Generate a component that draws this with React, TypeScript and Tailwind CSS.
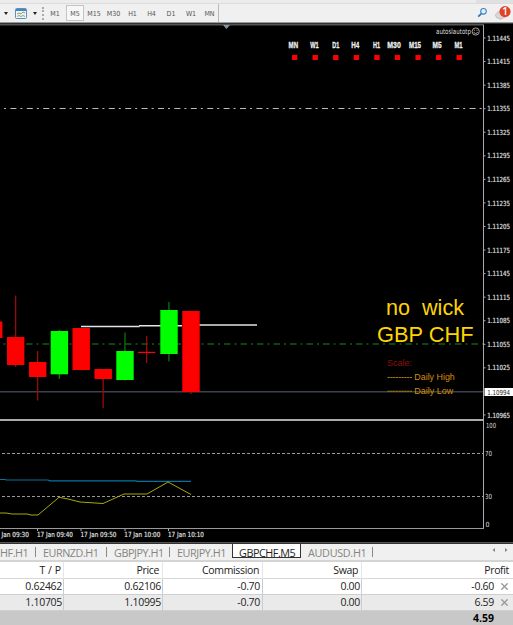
import { X } from 'lucide-react';

const timeframes = [
  { label: 'M1', width: 'w-[22px]' },
  { label: 'M5', width: 'w-[18px]' },
  { label: 'M15', width: 'w-5' },
  { label: 'M30', width: 'w-[19px]' },
  { label: 'H1', width: 'w-[19px]' },
  { label: 'H4', width: 'w-[19px]' },
  { label: 'D1', width: 'w-5' },
  { label: 'W1', width: 'w-5' },
  { label: 'MN', width: 'w-[17px]' },
];

const signals = [
  { label: 'MN', x: 293.3, width: 9.5 },
  { label: 'W1', x: 314.5, width: 8.5 },
  { label: 'D1', x: 335.8, width: 7 },
  { label: 'H4', x: 355.3, width: 8 },
  { label: 'H1', x: 376.6, width: 7 },
  { label: 'M30', x: 394, width: 13.5 },
  { label: 'M15', x: 415, width: 12 },
  { label: 'M5', x: 437, width: 9 },
  { label: 'M1', x: 458.5, width: 8 },
];

const prices = [
  '1.11445', '1.11415', '1.11385', '1.11355', '1.11325', '1.11295', '1.11265', '1.11235', '1.11205',
  '1.11175', '1.11145', '1.11115', '1.11085', '1.11055', '1.11025', '', '1.10965',
];

const candles = [
  { x: -15, top: 321.5, bottom: 338, high: 321.5, low: 338, up: false },
  { x: 7, top: 337, bottom: 365, high: 295.5, low: 367, up: false },
  { x: 29, top: 362, bottom: 377, high: 351, low: 400.5, up: false },
  { x: 50.7, top: 331, bottom: 374.3, high: 330, low: 379, up: true },
  { x: 72.5, top: 328, bottom: 370, high: 328, low: 370, up: false },
  { x: 94.5, top: 369, bottom: 379, high: 369, low: 408, up: false },
  { x: 116.3, top: 351, bottom: 380, high: 332.5, low: 380.5, up: true },
  { x: 138, top: 351.8, bottom: 353, high: 336, low: 363, up: false },
  { x: 160.3, top: 310, bottom: 354, high: 302, low: 361.5, up: true },
  { x: 182.3, top: 311, bottom: 392, high: 311, low: 394, up: false },
];

const times = [
  { label: 'Jan 09:30', tick: -7, x: 1.5, width: 27.5 },
  { label: '17 Jan 09:40', tick: 37, x: 37, width: 36 },
  { label: '17 Jan 09:50', tick: 80.5, x: 80.5, width: 36 },
  { label: '17 Jan 10:00', tick: 124.5, x: 124.3, width: 36 },
  { label: '17 Jan 10:10', tick: 168, x: 168, width: 36 },
];

const orders = [
  { tp: '0.62462', price: '0.62106', commission: '-0.70', swap: '0.00', profit: '-0.60' },
  { tp: '1.10705', price: '1.10995', commission: '-0.70', swap: '0.00', profit: '6.59' },
];

function Caret() {
  return <span className="h-0 w-0 border-x-[2px] border-t-[3px] border-x-transparent border-t-[#222]" />;
}

function Toolbar() {
  return (
    <div className="h-[22px] bg-[#f0f0f0]">
      <div className="flex h-1 justify-end border-b border-[#dcdcdc] bg-[#ececec]">
        <span className="w-[37px] bg-[#e0e0e0]" />
      </div>
      <div className="flex h-[18px] items-center">
        <div className="flex w-[41px] items-center pl-[4px]">
          <Caret />
          <svg className="ml-[7px] mr-[6px]" width="12" height="11" viewBox="0 0 12 11">
            <rect x="0.5" y="0.5" width="11" height="10" rx="1" fill="#eef6fb" stroke="#5b91bc" />
            <path d="M1 2h10" stroke="#4a86ba" strokeWidth="2" />
            <path d="M2 6l2-1 2 1 2-2 2 1" stroke="#a89358" fill="none" />
            <path d="M2 8.5l2-1 2 1 2-1 2 1" stroke="#78a87c" fill="none" />
          </svg>
          <Caret />
        </div>
        <div className="ml-[1px] h-[13px] border-l-2 border-dotted border-[#aaa]" />
        <div className="flex h-full items-center border-r border-[#b9b9b9] font-['DejaVu_Sans_Condensed','DejaVu_Sans',sans-serif] text-[7px] text-[#555]">
          {timeframes.map((tf) => (
            <span
              key={tf.label}
              className={`${tf.width} flex h-4 items-center justify-center pt-[2px] ${
                tf.label === 'M5' ? 'border border-[#c4c4c4] bg-[#f7f7f7]' : ''
              }`}
            >
              {tf.label}
            </span>
          ))}
        </div>
        <svg className="ml-auto" width="37" height="18" viewBox="476 4 37 18">
          <circle cx="483.5" cy="11.3" r="2.8" fill="#e0effa" stroke="#4285bd" strokeWidth="1.1" />
          <path d="M481.4 13.6l-3.2 3" stroke="#3475b4" strokeWidth="1.8" />
          <path d="M495.5 15.5q.5-4 5.5-4t5 3-4 4l-2 1-.5-1q-3.500 0-4-3z" fill="#d7d7d7" stroke="#aaa" strokeWidth="0.6" />
          <circle cx="505" cy="11.6" r="5.6" fill="#e04328" />
          <text x="505" y="15.2" textAnchor="middle" fontSize="10" fontWeight="600" fill="#fff" fontFamily="Open Sans, sans-serif">1</text>
        </svg>
      </div>
    </div>
  );
}

function Chart() {
  return (
    <svg className="block" width="513" height="521" viewBox="0 22 513 521" fontFamily="DejaVu Sans Condensed, DejaVu Sans, sans-serif">
      <rect x="0" y="22" width="513" height="521" fill="#000" />
      <rect x="0" y="22" width="513" height="1" fill="#999" />
      <rect x="0" y="23" width="513" height="1" fill="#333" />
      <rect x="0" y="24" width="484" height="1.5" fill="#555" />
      <path d="M223 25h7l-3.5 4z" fill="#8793a3" />

      {/* Price levels */}
      <path d="M0 108.5H483" stroke="#bbb" strokeDasharray="6 4 2 4.4" strokeDashoffset="6" />
      <path d="M0 344H483" stroke="#155915" strokeWidth="1.5" strokeDasharray="6.5 4 2 4" strokeDashoffset="7" />
      <path d="M0 391.8H483" stroke="#3a4148" strokeWidth="1.4" />
      <path d="M81 326.5H139.5M139 325.7H182M198 325H257" stroke="#e4e4e4" strokeWidth="1.6" />

      {candles.map((c) => (
        <g key={c.x}>
          <rect x={c.x + 8} y={c.high} width="1.3" height={c.low - c.high} fill={c.up ? '#087808' : '#9c0909'} />
          <rect x={c.x} y={c.top} width="17.4" height={c.bottom - c.top} fill={c.up ? '#00ff00' : '#ff0000'} />
        </g>
      ))}

      {/* Signal panel */}
      <text x="436" y="34" fontSize="7.5" fill="#ddd" textLength="35" lengthAdjust="spacingAndGlyphs">autoslautotp</text>
      <g fill="none" stroke="#ccc" strokeWidth="0.8">
        <circle cx="475.7" cy="31.5" r="3.6" />
        <path d="M473.6 32.3q2.1 2.7 4.2 0M474.4 29.8v1M477 29.8v1" />
      </g>
      {signals.map((s, i) => (
        <g key={s.label}>
          <text
            x={s.x}
            y="47.8"
            textAnchor="middle"
            fontFamily="Liberation Sans, sans-serif"
            fontWeight="700"
            fontSize="9"
            fill="#eee"
            stroke="#eee"
            strokeWidth="0.3"
            textLength={s.width}
            lengthAdjust="spacingAndGlyphs"
          >
            {s.label}
          </text>
          <rect x={292 + i * 20.57} y="55" width="5.3" height="5" fill="#f00" />
        </g>
      ))}

      {/* Notes */}
      <g fontFamily="Liberation Sans, sans-serif">
        <text x="386" y="314.7" fontSize="21.5" fill="#ffd400" textLength="78" lengthAdjust="spacingAndGlyphs">{'no\u00a0 wick'}</text>
        <text x="377" y="342" fontSize="21.5" fill="#ffd400" textLength="96.5" lengthAdjust="spacingAndGlyphs">GBP CHF</text>
        <text x="387" y="366.2" fontSize="9.5" fill="#8c1208" textLength="25" lengthAdjust="spacingAndGlyphs">Scale:</text>
        <path d="M387.500 377.5H412M387.5 391.2H412" stroke="#b98205" strokeWidth="0.9" strokeDasharray="2.4 0.4" />
        <text x="414.3" y="380.2" fontSize="9.500" fill="#d48d0b" textLength="40.5" lengthAdjust="spacingAndGlyphs">Daily High</text>
        <text x="414.3" y="393.8" fontSize="9.5" fill="#d48d0b" textLength="39" lengthAdjust="spacingAndGlyphs">Daily Low</text>
      </g>

      {/* Price axis */}
      <path d="M483.5 25V528.5" stroke="#aaa" />
      {prices.map((p, i) =>
        p ? (
          <g key={p}>
            <path d={`M484 ${38 + i * 23.56}h1.5`} stroke="#aaa" />
            <text x="487.3" y={40.6 + i * 23.56} fontSize="7" fill="#e4e4e4" stroke="#e4e4e4" strokeWidth="0.15" textLength="22.7" lengthAdjust="spacingAndGlyphs">{p}</text>
          </g>
        ) : null
      )}
      <rect x="484.5" y="388" width="28.5" height="8" fill="#fff" />
      <text x="487.3" y="394.6" fontSize="7" fill="#222" textLength="22.7" lengthAdjust="spacingAndGlyphs">1.10994</text>

      {/* Oscillator */}
      <rect x="0" y="419" width="484" height="2" fill="#aaa" />
      <path d="M2 453.5H483M2 496.5H483" stroke="#999" strokeDasharray="3 2" />
      <path d="M0 479.5H5L6 480H48L50 480.8H136L137 481.3H191" fill="none" stroke="#08749d" strokeWidth="1.2" />
      <path
        d="M0 513L6 513L12 514L27 514L31 515H38L59 497.3L68 499L80 502L103 503.5L124 494H147L168 482L191 494.5"
        fill="none"
        stroke="#aaa80b"
      />
      <path d="M0 528.5H484" stroke="#999" />
      <g fontSize="7" fill="#ddd">
        <text x="486" y="428" textLength="10" lengthAdjust="spacingAndGlyphs">100</text>
        <text x="485" y="456" textLength="7" lengthAdjust="spacingAndGlyphs">70</text>
        <text x="485" y="499" textLength="7" lengthAdjust="spacingAndGlyphs">30</text>
        <text x="485.5" y="526.5">0</text>
      </g>
      {times.map((t) => (
        <g key={t.label}>
          <path d={`M${t.tick + 0.5} 529v2`} stroke="#aaa" />
          <text x={t.x} y="537.4" fontSize="7" fill="#e4e4e4" stroke="#e4e4e4" strokeWidth="0.15" textLength={t.width} lengthAdjust="spacingAndGlyphs">{t.label}</text>
        </g>
      ))}
      <rect x="0" y="542" width="513" height="1" fill="#555" />
    </svg>
  );
}

function Divider() {
  return <span className="mt-[3px] h-[10px] w-px bg-[#888]" />;
}

function ChartTabs() {
  return (
    <div className="flex h-[17px] overflow-hidden border-t border-[#333] bg-[#f0f0f0] text-[10.8px] leading-[16px] tracking-[-0.45px] whitespace-nowrap text-[#85857f]">
      <span className="w-[35px] pt-px">HF.H1</span>
      <Divider />
      <span className="w-[70px] pt-px pl-[7px]">EURNZD.H1</span>
      <Divider />
      <span className="w-[62px] pt-px pl-[7px]">GBPJPY.H1</span>
      <Divider />
      <span className="w-[62px] pt-px pl-[7px]">EURJPY.H1</span>
      <span className="h-[14px] w-[69px] border-x border-b border-[#333] bg-white pt-px pl-[6px] text-[#222]">GBPCHF.M5</span>
      <span className="w-[71px] pt-px pl-[7px] tracking-[-0.3px]">AUDUSD.H1</span>
      <Divider />
      <svg className="ml-auto mr-1" width="18" height="12" viewBox="0 0 18 12">
        <path d="M4 4v4l-2.5-2zM14 4v4l2.500-2z" fill="#888" />
      </svg>
    </div>
  );
}

function OrderTable() {
  return (
    <div className="text-[10.5px] text-[#222]">
      <div className="grid h-[19px] grid-cols-[64px_99px_100px_99px_1fr] border-t-2 border-b border-t-[#d4d4d4] border-b-[#d8d8d8] bg-white text-right leading-[17px] tracking-[-0.35px]">
        <span className="border-r border-[#e6e6e6] pr-[2px] tracking-normal">T / P</span>
        <span className="border-r border-[#e6e6e6] pr-[3px]">Price</span>
        <span className="border-r border-[#e6e6e6] pr-[3px]">Commission</span>
        <span className="border-r border-[#e6e6e6] pr-[3px]">Swap</span>
        <span className="pr-1">Profit</span>
      </div>
      {orders.map((o, i) => (
        <div
          key={o.tp}
          className={`grid h-4 grid-cols-[64px_99px_100px_99px_1fr] border-b border-[#cfcfcf] text-right leading-[15px] tracking-[-0.3px] ${
            i === 1 ? 'bg-[#eaeaea]' : 'bg-white'
          }`}
        >
          <span className="border-r border-[#ccc] pr-[1px]">{o.tp}</span>
          <span className="border-r border-[#ccc] pr-[1px]">{o.price}</span>
          <span className="border-r border-[#ccc] pr-[2px]">{o.commission}</span>
          <span className="border-r border-[#ccc] pr-[1px]">{o.swap}</span>
          <span className="flex items-center justify-end pr-[3px]">
            {o.profit}
            <X size={11} strokeWidth={3} className="ml-[5px] text-[#999]" />
          </span>
        </div>
      ))}
      <div className="h-[14px] bg-[#c8c8c8] pr-[19px] text-right leading-[14px] font-bold text-black">4.59</div>
    </div>
  );
}

export default function App() {
  return (
    <div className="h-[625px] w-[513px] overflow-hidden bg-[#c8c8c8] font-['Open_Sans','Noto_Sans',sans-serif]">
      <Toolbar />
      <Chart />
      <ChartTabs />
      <OrderTable />
    </div>
  );
}
